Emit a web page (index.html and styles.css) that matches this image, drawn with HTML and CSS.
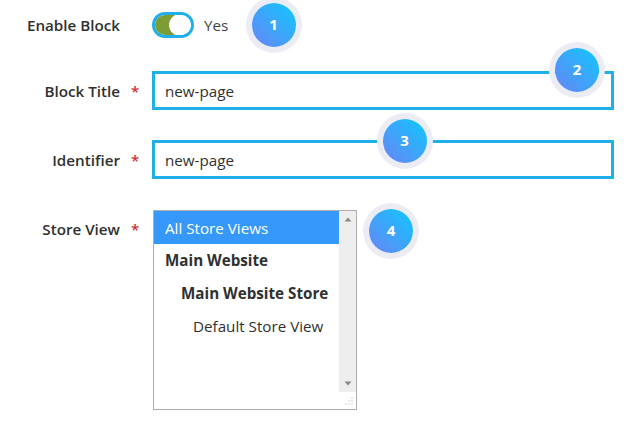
FILE: index.html
```html
<!DOCTYPE html>
<html lang="en">
<head>
<meta charset="utf-8">
<title>Block</title>
<link rel="stylesheet" href="styles.css">
</head>
<body>
<form class="form">
  <div class="row row-toggle">
    <span class="label">Enable Block</span>
    <span class="field toggle-field">
      <span class="toggle"><span class="toggle-on"></span><span class="knob"></span></span>
      <span class="yes">Yes</span>
    </span>
  </div>
  <div class="row row-input">
    <span class="label req">Block Title</span>
    <span class="field"><span class="input">new-page</span></span>
  </div>
  <div class="row row-input">
    <span class="label req">Identifier</span>
    <span class="field"><span class="input">new-page</span></span>
  </div>
  <div class="row row-select">
    <span class="label req label-select">Store View</span>
    <div class="listbox">
      <div class="options">
        <div class="option selected">All Store Views</div>
        <div class="option bold">Main Website</div>
        <div class="option bold indent1">Main Website Store</div>
        <div class="option indent2">Default Store View</div>
      </div>
      <div class="scrollcol">
        <div class="scrollbar">
          <svg class="arrow" width="8" height="5" viewBox="0 0 8 5"><path d="M4 0.5 L7.5 4.5 H0.5 Z" fill="#888"/></svg>
          <svg class="arrow" width="8" height="5" viewBox="0 0 8 5"><path d="M4 4.5 L7.5 0.5 H0.5 Z" fill="#888"/></svg>
        </div>
        <svg class="grip" width="16" height="17" viewBox="0 0 16 17"><path d="M12.5 5.5h1v1h-1zM12.5 8.5h1v1h-1zM12.5 11.5h1v1h-1zM9.5 8.5h1v1h-1zM9.5 11.5h1v1h-1zM6.5 11.5h1v1h-1z" fill="#aaa"/></svg>
      </div>
    </div>
  </div>
</form>
<span class="badge b1">1</span>
<span class="badge b2">2</span>
<span class="badge b3">3</span>
<span class="badge b4">4</span>
</body>
</html>
```
FILE: styles.css
```css
html, body {
  margin: 0;
  padding: 0;
  background: #fff;
}
body {
  position: relative;
  width: 626px;
  height: 427px;
  overflow: hidden;
  font-family: "Open Sans", "Liberation Sans", sans-serif;
  font-size: 15.2px;
  color: #303030;
}
.form {
  display: flex;
  flex-direction: column;
  padding: 12px 12px 0 0;
}
.row {
  display: flex;
  align-items: center;
}
.row-toggle { height: 26px; margin-bottom: 33px; }
.row-input { height: 39px; margin-bottom: 30px; }
.row-select { align-items: flex-start; margin-top: 1px; }
.label {
  width: 120px;
  flex: none;
  text-align: right;
  font-weight: 600;
  color: #303030;
  position: relative;
}
.label-select { padding-top: 9px; }
.req::after {
  content: "*";
  position: absolute;
  left: 131px;
  top: 50%;
  transform: translateY(-50%);
  color: #d0312d;
  font-size: 15px;
}
.label-select.req::after { top: calc(50% + 4px); }
.field {
  margin-left: 32px;
  flex: 1;
  display: flex;
}
.toggle-field {
  align-items: center;
}
.toggle {
  width: 42px;
  height: 26px;
  box-sizing: border-box;
  border: 3px solid #1fb0ec;
  border-radius: 13px;
  background: #fff;
  display: flex;
  align-items: center;
  overflow: hidden;
  position: relative;
}
.toggle-on {
  width: 26px;
  height: 20px;
  background: #7c9c35;
}
.knob {
  position: absolute;
  left: 14px;
  top: -1px;
  width: 22px;
  height: 22px;
  border-radius: 50%;
  background: #fff;
}
.yes { margin-left: 10px; color: #41474c; }
.input {
  flex: 1;
  height: 39px;
  box-sizing: border-box;
  border: 3px solid #1fb0ec;
  padding-left: 10px;
  line-height: 34px;
  color: #303030;
}
.listbox {
  margin-left: 33px;
  width: 204px;
  height: 200px;
  box-sizing: border-box;
  border: 1px solid #adadad;
  display: flex;
  background: #fff;
}
.options { flex: 1; }
.option {
  height: 33px;
  line-height: 33px;
  padding-left: 11px;
  color: #303030;
  white-space: nowrap;
}
.selected { background: #3798fb; color: #fff; line-height: 34px; }
.bold { font-weight: 700; }
.indent1 { padding-left: 27px; }
.indent2 { padding-left: 39px; }
.scrollcol {
  width: 17px;
  flex: none;
  display: flex;
  flex-direction: column;
}
.scrollbar {
  height: 181px;
  background: #eee;
  display: flex;
  flex-direction: column;
  justify-content: space-between;
  align-items: center;
  padding: 6px 0;
  box-sizing: border-box;
}
.arrow, .grip { display: block; }
.badge {
  position: absolute;
  width: 44px;
  height: 44px;
  margin: -22px 0 0 -22px;
  border-radius: 50%;
  box-shadow: 0 0 0 6px #ebecf4;
  background: linear-gradient(45deg, #6a84f5, #0ec8ff);
  color: #fff;
  font-weight: 700;
  font-size: 15px;
  line-height: 43px;
  text-align: center;
}
.b1 { left: 273.5px; top: 25px; }
.b2 { left: 577px; top: 70px; }
.b3 { left: 404.5px; top: 141px; }
.b4 { left: 391px; top: 231px; }
```
